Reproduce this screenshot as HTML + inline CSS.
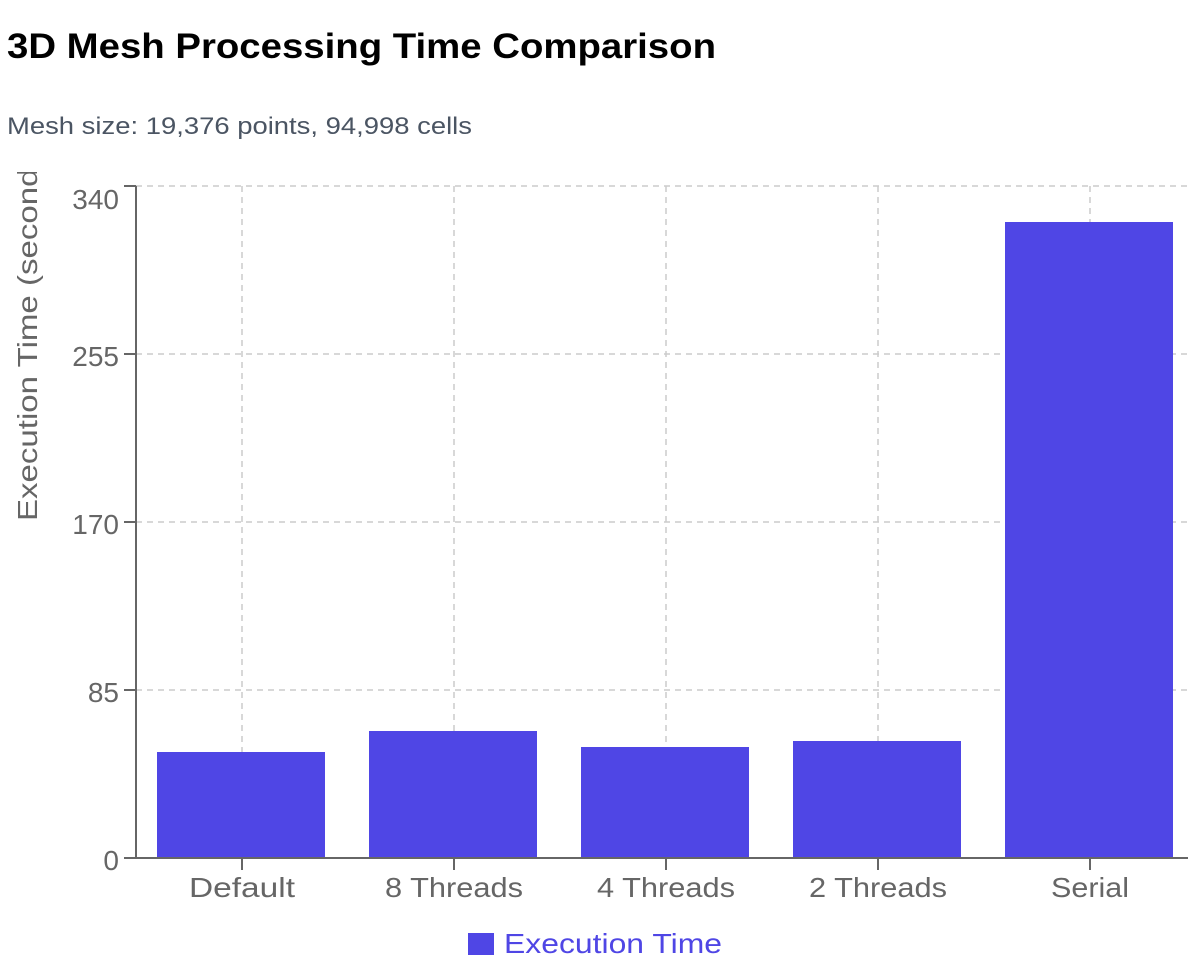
<!DOCTYPE html>
<html><head><meta charset="utf-8"><style>
body{margin:0;width:1188px;height:973px;background:#fff;overflow:hidden;font-family:"Liberation Sans",sans-serif}
</style></head><body>
<svg width="1188" height="973" xmlns="http://www.w3.org/2000/svg" font-family="Liberation Sans, sans-serif">
<text x="7" y="58" font-size="35" font-weight="bold" fill="#000" textLength="709" lengthAdjust="spacingAndGlyphs">3D Mesh Processing Time Comparison</text>
<text x="7" y="134" font-size="24" fill="#4b5563" textLength="465" lengthAdjust="spacingAndGlyphs">Mesh size: 19,376 points, 94,998 cells</text>
<g stroke="#ccc" stroke-width="1.5" stroke-dasharray="6 5">
<line x1="136" y1="186" x2="1188" y2="186"/><line x1="136" y1="354" x2="1188" y2="354"/>
<line x1="136" y1="522" x2="1188" y2="522"/><line x1="136" y1="690" x2="1188" y2="690"/>
<line x1="242" y1="186" x2="242" y2="858"/><line x1="454" y1="186" x2="454" y2="858"/>
<line x1="666" y1="186" x2="666" y2="858"/><line x1="878" y1="186" x2="878" y2="858"/>
<line x1="1090" y1="186" x2="1090" y2="858"/>
</g>
<g fill="#4f46e5">
<rect x="157" y="752" width="168" height="106"/><rect x="369" y="731" width="168" height="127"/>
<rect x="581" y="747" width="168" height="111"/><rect x="793" y="741" width="168" height="117"/>
<rect x="1005" y="222" width="168" height="636"/>
</g>
<g stroke="#666" stroke-width="2">
<line x1="136" y1="186" x2="136" y2="858"/><line x1="136" y1="858" x2="1188" y2="858"/>
<line x1="124" y1="186" x2="136" y2="186"/><line x1="124" y1="354" x2="136" y2="354"/>
<line x1="124" y1="522" x2="136" y2="522"/><line x1="124" y1="690" x2="136" y2="690"/>
<line x1="124" y1="858" x2="136" y2="858"/>
<line x1="242" y1="858" x2="242" y2="870"/><line x1="454" y1="858" x2="454" y2="870"/>
<line x1="666" y1="858" x2="666" y2="870"/><line x1="878" y1="858" x2="878" y2="870"/>
<line x1="1090" y1="858" x2="1090" y2="870"/>
</g>
<g font-size="28" fill="#666" text-anchor="end">
<text x="119" y="209">340</text><text x="119" y="366">255</text><text x="119" y="534">170</text>
<text x="119" y="702">85</text><text x="119" y="870">0</text>
</g>
<g font-size="28" fill="#666" text-anchor="middle">
<text x="242" y="897" textLength="106" lengthAdjust="spacingAndGlyphs">Default</text>
<text x="454" y="897" textLength="138" lengthAdjust="spacingAndGlyphs">8 Threads</text>
<text x="666" y="897" textLength="138" lengthAdjust="spacingAndGlyphs">4 Threads</text>
<text x="878" y="897" textLength="138" lengthAdjust="spacingAndGlyphs">2 Threads</text>
<text x="1090" y="897" textLength="78" lengthAdjust="spacingAndGlyphs">Serial</text>
</g>
<clipPath id="c"><rect x="0" y="172" width="60" height="400"/></clipPath>
<g clip-path="url(#c)">
<text transform="translate(37,521) rotate(-90)" font-size="28" fill="#666" textLength="380" lengthAdjust="spacingAndGlyphs">Execution Time (seconds)</text>
</g>
<rect x="468" y="933" width="26" height="22" fill="#4f46e5"/>
<text x="504" y="953" font-size="28" fill="#4f46e5" textLength="218" lengthAdjust="spacingAndGlyphs">Execution Time</text>
</svg>
</body></html>
